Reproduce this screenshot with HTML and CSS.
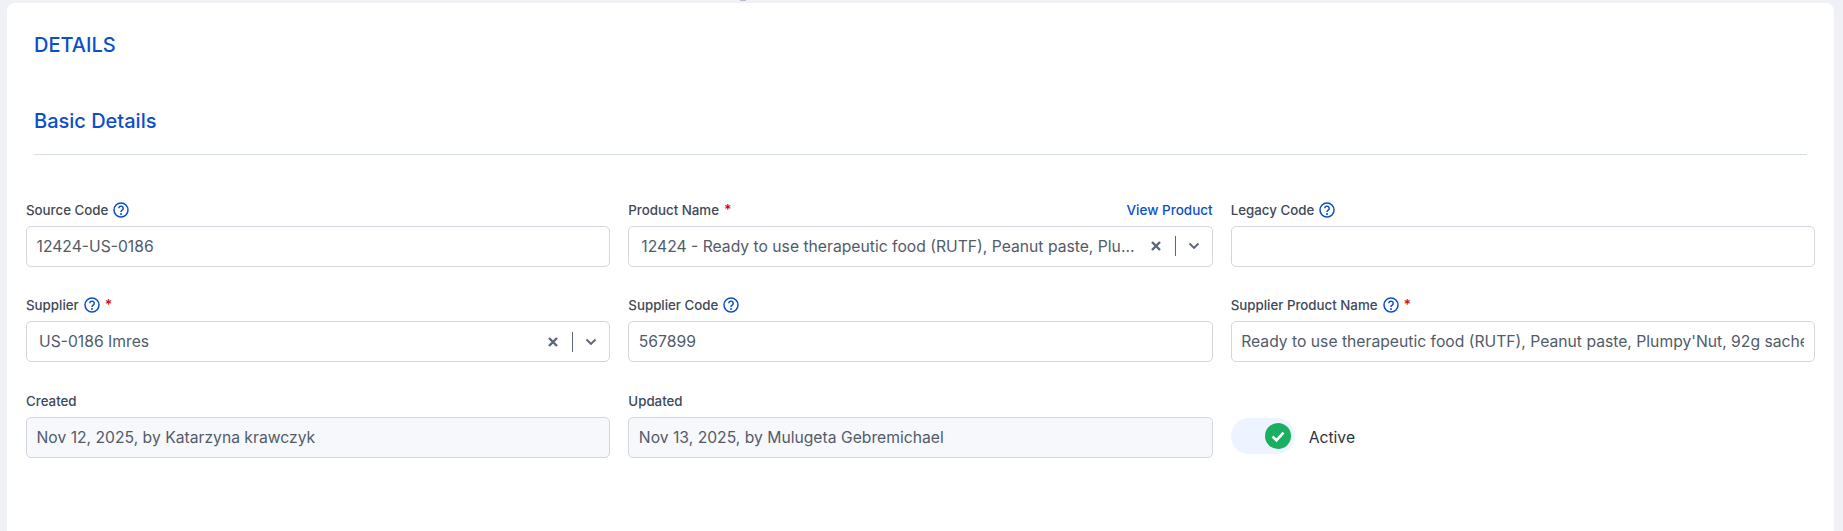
FILE: index.html
```html
<!DOCTYPE html>
<html lang="en">
<head>
    <meta charset="UTF-8">
    <title>Details</title>
    <link rel="stylesheet" href="styles.css">
</head>
<body>
    <div class="top-speck"></div>
    <main class="card">
        <h1 class="page-title">DETAILS</h1>
        <h2 class="section-title">Basic Details</h2>
        <hr class="divider">

        <div class="form-grid">
            <div class="field">
                <div class="field-label">
                    <label>Source Code</label>
                    <svg class="help" viewBox="0 0 16 16"><use href="#help-icon"/></svg>
                </div>
                <input class="text-input" type="text" value="12424-US-0186">
            </div>

            <div class="field">
                <div class="field-label">
                    <label>Product Name</label>
                    <span class="required">*</span>
                    <a class="label-link" href="#">View Product</a>
                </div>
                <div class="select-box">
                    <span class="select-value">12424 - Ready to use therapeutic food (RUTF), Peanut paste, Plumpy'Nut, 92g sachet</span>
                    <svg class="select-clear" viewBox="0 0 12 12"><use href="#clear-icon"/></svg>
                    <span class="select-sep"></span>
                    <svg class="select-arrow" viewBox="0 0 12 8"><use href="#arrow-icon"/></svg>
                </div>
            </div>

            <div class="field">
                <div class="field-label">
                    <label>Legacy Code</label>
                    <svg class="help" viewBox="0 0 16 16"><use href="#help-icon"/></svg>
                </div>
                <input class="text-input" type="text" value="">
            </div>

            <div class="field">
                <div class="field-label">
                    <label>Supplier</label>
                    <svg class="help" viewBox="0 0 16 16"><use href="#help-icon"/></svg>
                    <span class="required">*</span>
                </div>
                <div class="select-box">
                    <span class="select-value">US-0186 Imres</span>
                    <svg class="select-clear" viewBox="0 0 12 12"><use href="#clear-icon"/></svg>
                    <span class="select-sep"></span>
                    <svg class="select-arrow" viewBox="0 0 12 8"><use href="#arrow-icon"/></svg>
                </div>
            </div>

            <div class="field">
                <div class="field-label">
                    <label>Supplier Code</label>
                    <svg class="help" viewBox="0 0 16 16"><use href="#help-icon"/></svg>
                </div>
                <input class="text-input" type="text" value="567899">
            </div>

            <div class="field">
                <div class="field-label">
                    <label>Supplier Product Name</label>
                    <svg class="help" viewBox="0 0 16 16"><use href="#help-icon"/></svg>
                    <span class="required">*</span>
                </div>
                <input class="text-input" type="text" value="Ready to use therapeutic food (RUTF), Peanut paste, Plumpy'Nut, 92g sachet">
            </div>

            <div class="field">
                <div class="field-label">
                    <label>Created</label>
                </div>
                <input class="text-input readonly" type="text" value="Nov 12, 2025, by Katarzyna krawczyk" readonly>
            </div>

            <div class="field">
                <div class="field-label">
                    <label>Updated</label>
                </div>
                <input class="text-input readonly" type="text" value="Nov 13, 2025, by Mulugeta Gebremichael" readonly>
            </div>

            <div class="field status-field">
                <div class="toggle">
                    <span class="toggle-knob">
                        <svg viewBox="0 0 26 26"><path d="M7.5 13.5l4 3.8 7-7.6" fill="none" stroke="#fff" stroke-width="2.6"/></svg>
                    </span>
                </div>
                <span class="toggle-label">Active</span>
            </div>
        </div>
    </main>

    <svg class="icon-defs" aria-hidden="true">
        <symbol id="help-icon" viewBox="0 0 16 16">
            <circle cx="8" cy="8" r="7" fill="none" stroke="currentColor" stroke-width="1.5"/>
            <path d="M5.8 6.3a2.2 2.2 0 1 1 3.4 1.9c-.8.5-1.2.9-1.2 1.8" fill="none" stroke="currentColor" stroke-width="1.5"/>
            <circle cx="8" cy="12" r="1" fill="currentColor"/>
        </symbol>
        <symbol id="clear-icon" viewBox="0 0 12 12">
            <path d="M2 2l8 8M10 2l-8 8" fill="none" stroke="currentColor" stroke-width="2.4"/>
        </symbol>
        <symbol id="arrow-icon" viewBox="0 0 12 8">
            <path d="M1.5 1.5L6 6l4.5-4.5" fill="none" stroke="currentColor" stroke-width="1.9"/>
        </symbol>
    </svg>
</body>
</html>
```

FILE: styles.css
```css
* {
    box-sizing: border-box;
}

html, body {
    height: 100%;
}

body {
    margin: 0;
    padding: 3px 9px 0 7px;
    background-color: #eff1f6;
    font-family: Inter, "Noto Sans", sans-serif;
    color: #3d4654;
    overflow: hidden;
}

.top-speck {
    position: absolute;
    top: 0;
    left: 740px;
    width: 6px;
    height: 1px;
    background-color: #b9bcc2;
}

.card {
    height: 100%;
    padding: 0 19px;
    background-color: #fff;
    border-radius: 8px 8px 0 0;
}

.page-title,
.section-title {
    margin: 0;
    color: #0b4fc9;
    font-size: 20px;
    line-height: 24px;
    font-weight: 500;
}

.page-title {
    padding: 30px 0 0 8px;
}

.section-title {
    padding: 52px 0 0 8px;
}

.divider {
    height: 1px;
    margin: 21px 8px 0;
    border: none;
    background-color: #d5dce8;
}

.form-grid {
    display: grid;
    grid-template-columns: repeat(3, minmax(0, 1fr));
    column-gap: 18px;
    row-gap: 30px;
    margin-top: 46px;
}

.field-label {
    display: flex;
    align-items: center;
    gap: 5px;
    height: 17px;
    margin-bottom: 7.5px;
    font-size: 13.3px;
    font-weight: 500;
    color: #404957;
}

.help {
    width: 16px;
    height: 16px;
    color: #0b4fc9;
}

.required {
    color: #d0101c;
    font-size: 14px;
    line-height: 14px;
    font-weight: 600;
}

.label-link {
    margin-left: auto;
    color: #0b4fc9;
    font-size: 13.5px;
    font-weight: 500;
    text-decoration: none;
}

.text-input,
.select-box {
    width: 100%;
    height: 41px;
    border: 1px solid #d3d6dc;
    border-radius: 5px;
    background-color: #fff;
    font-family: inherit;
    font-size: 15.7px;
    color: #525b69;
}

.text-input {
    display: block;
    padding: 0 9.5px;
    outline: none;
}

.text-input.readonly {
    background-color: #f6f8fc;
}

.select-box {
    display: flex;
    align-items: center;
    padding: 0 12px;
}

.select-value {
    flex: 1;
    min-width: 0;
    overflow: hidden;
    white-space: nowrap;
    text-overflow: ellipsis;
}

.select-clear {
    flex: none;
    width: 12px;
    height: 12px;
    margin-left: 12px;
    color: #5b6679;
}

.select-sep {
    flex: none;
    width: 1px;
    height: 20px;
    margin-left: 13px;
    background-color: #5b6679;
}

.select-arrow {
    flex: none;
    width: 12px;
    height: 8px;
    margin-left: 12px;
    color: #5b6679;
}

.status-field {
    display: flex;
    align-items: center;
    align-self: end;
    gap: 14px;
    height: 41px;
}

.toggle {
    display: flex;
    align-items: center;
    justify-content: flex-end;
    width: 64px;
    height: 36px;
    margin-bottom: 3px;
    padding-right: 4px;
    border-radius: 18px;
    background-color: #edf4ff;
}

.toggle-knob {
    display: block;
    width: 26px;
    height: 26px;
    border-radius: 50%;
    background-color: #1aae61;
}

.toggle-knob svg {
    display: block;
    width: 26px;
    height: 26px;
}

.toggle-label {
    font-size: 15.7px;
    color: #2b3340;
}

.icon-defs {
    position: absolute;
    width: 0;
    height: 0;
}
```
